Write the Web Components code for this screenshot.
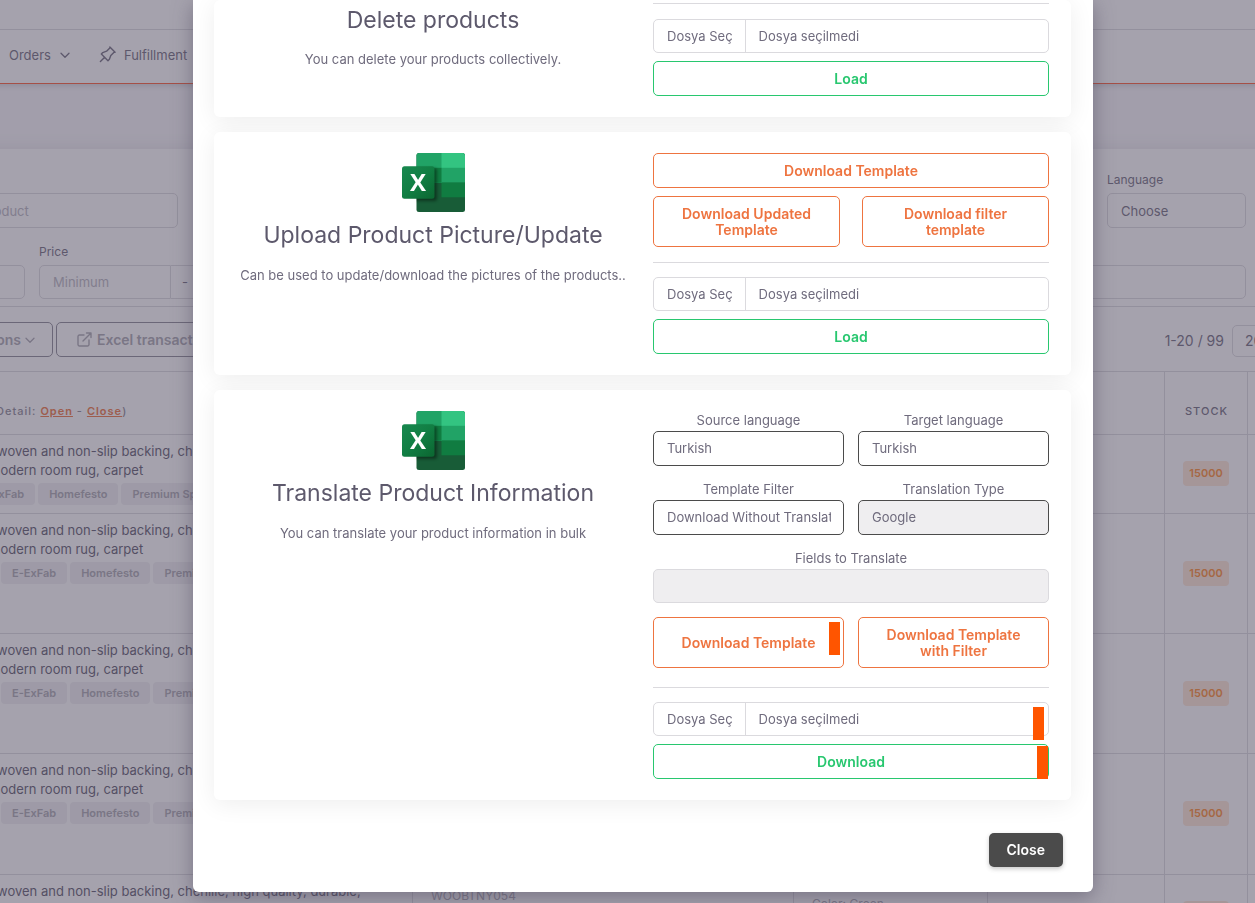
<!DOCTYPE html>
<html lang="en">
<head>
<meta charset="utf-8">
<title>Products</title>
<style>
  html, body { margin: 0; height: 100%; overflow: hidden; }
  body {
    font-family: Inter, "Noto Sans", sans-serif;
    font-size: 13px; line-height: 20px; color: #6f6b7d; background: #f8f7fa;
    --orange: #ee7440; --green: #28c76f; --line: #dbdade; --dark: #4b4b4b;
  }
</style>
</head>
<body>
<products-page></products-page>
<modal-overlay>
  <tool-card>
    <card-intro slot="intro" heading="Delete products" plain>You can delete your products collectively.</card-intro>
    <card-rule class="first"></card-rule>
    <file-picker></file-picker>
    <action-button tone="green">Load</action-button>
  </tool-card>
  <tool-card padded>
    <card-intro slot="intro" heading="Upload Product Picture/Update">Can be used to update/download the pictures of the products..</card-intro>
    <action-button>Download Template</action-button>
    <pair-row wide>
      <action-button tall>Download Updated Template</action-button>
      <action-button tall>Download filter template</action-button>
    </pair-row>
    <card-rule></card-rule>
    <file-picker></file-picker>
    <action-button tone="green">Load</action-button>
  </tool-card>
  <tool-card padded>
    <card-intro slot="intro" heading="Translate Product Information">You can translate your product information in bulk</card-intro>
    <form-grid>
      <select-field label="Source language" value="Turkish"></select-field>
      <select-field label="Target language" value="Turkish"></select-field>
      <select-field label="Template Filter" value="Download Without Translation"></select-field>
      <select-field label="Translation Type" value="Google" disabled></select-field>
      <text-field label="Fields to Translate"></text-field>
    </form-grid>
    <pair-row>
      <action-button tall mark="inset">Download Template</action-button>
      <action-button tall>Download Template with Filter</action-button>
    </pair-row>
    <card-rule roomy></card-rule>
    <file-picker mark></file-picker>
    <action-button tone="green" mark="edge">Download</action-button>
  </tool-card>
  <close-button slot="footer">Close</close-button>
</modal-overlay>

<script>
const define = (name, render) => customElements.define(name, class extends HTMLElement {
  connectedCallback() {
    if (this.shadowRoot) return;
    this.attachShadow({ mode: 'open' }).innerHTML =
      '<style>*,*::before,*::after{box-sizing:border-box}:host{display:block}button,input,select{font:inherit;margin:0}</style>' + render(this);
  }
});
const chevron = '<svg width="12" height="12" viewBox="0 0 12 12" fill="none" stroke="currentColor" stroke-width="1.3" stroke-linecap="round" stroke-linejoin="round"><path d="M2 4.2 6 8.2 10 4.2"/></svg>';

/* ---------- page behind the dialog ---------- */
define('products-page', () => `
  <style>
    :host { margin: 0 -31px 0 -120px; }
    main { margin-top: 65px; background: #fff; box-shadow: 0 0 16px rgba(75,70,92,.12); }
  </style>
  <site-header></site-header>
  <main><product-filters></product-filters><list-toolbar></list-toolbar><product-table></product-table></main>`);

define('site-header', () => `
  <style>
    :host { background: #fff; position: relative; box-shadow: 0 2px 5px rgba(75,70,92,.2); }
    .top { height: 30px; border-bottom: 1px solid var(--line); }
    nav { display: flex; align-items: center; height: 54px; padding: 0 0 4px 129px; border-bottom: 1px solid #ff5a32; font-size: 13px; }
    a { display: flex; align-items: center; color: inherit; text-decoration: none; }
    a + a { margin-left: 28px; }
    a span + svg { margin-left: 8px; }
    svg + span { margin-left: 8px; }
  </style>
  <div class="top"></div>
  <nav>
    <a href="#orders"><span>Orders</span>${chevron}</a>
    <a href="#fulfillment"><svg width="17" height="17" viewBox="3 3 18 18" fill="none" stroke="currentColor" stroke-width="1.5" stroke-linecap="round" stroke-linejoin="round"><path d="M15 4.500l-4 4-4 1.500-1.500 1.500 7 7 1.500-1.500 1.500-4 4-4M9 15l-4.500 4.500M14.500 4l5.500 5.500"/></svg><span>Fulfillment</span></a>
  </nav>`);

define('product-filters', () => `
  <style>
    :host { padding: 23px 40px 7px 0; border-bottom: 1px solid var(--line); font-size: 12px; line-height: 16px; }
    .row { display: flex; align-items: flex-end; }
    .one { gap: 15px; } .two { gap: 14px; margin-top: 16px; }
    .one > :nth-child(1) { flex: 0 0 298px; }
    .one > :nth-child(2), .two > :nth-child(3) { flex: 1; }
    .one > :nth-child(3) { flex: 0 0 139px; }
    .two > :nth-child(1) { flex: 0 0 145px; }
    .two > :nth-child(2) { flex: 0 0 300px; }
    label { display: block; margin-bottom: 5px; }
    input, select { width: 100%; min-width: 0; height: 35px; border: 1px solid var(--line); border-radius: 5px; padding: 0 13px; font-size: 13px; color: inherit; background: #fff; appearance: none; }
    .two input { height: 34px; }
    input::placeholder { color: #b7b5be; opacity: 1; }
    .group { display: flex; }
    .group span { border: solid var(--line); border-width: 1px 0; padding: 8px 11px; font-size: 13px; }
    .group input:first-child { border-radius: 5px 0 0 5px; }
    .group input:last-child { border-radius: 0 5px 5px 0; }
    .group input { flex: 0 0 132px; }
    .end { padding-left: 100px; }
  </style>
  <div class="row one">
    <div><input class="end" aria-label="Product" placeholder="product"></div>
    <div><input aria-label="Category"></div>
    <div><label for="lang">Language</label><select id="lang"><option>Choose</option></select></div>
  </div>
  <div class="row two">
    <div><input aria-label="Code"></div>
    <div><label for="min">Price</label><div class="group"><input id="min" placeholder="Minimum"><span>-</span><input aria-label="Maximum price"></div></div>
    <div><input aria-label="Tags"></div>
  </div>`);

define('list-toolbar', () => `
  <style>
    :host { display: flex; align-items: center; gap: 3px; padding: 15px 0 14px; border-bottom: 1px solid var(--line); font-size: 14px; }
    button, select { flex: none; }
    button { display: flex; align-items: center; height: 35px; border: 1px solid #8b8994; border-radius: 5px; background: none; color: #a8a6af; font-weight: 600; padding: 0 16px 0 20px; white-space: nowrap; }
    .actions { width: 173px; justify-content: flex-end; gap: 3px; }
    .excel { gap: 5px; }
    .count { margin-left: auto; padding-top: 3px; }
    select { width: 54px; height: 32px; margin: 3px 0 0 5px; border: 1px solid var(--line); border-radius: 5px 0 0 5px; padding: 0 12px; background: #fff; color: inherit; appearance: none; }
  </style>
  <button class="actions">Actions${chevron}</button>
  <button class="excel"><svg width="15" height="15" viewBox="0 0 15 15" fill="none" stroke="currentColor" stroke-width="1.4" stroke-linecap="round" stroke-linejoin="round"><path d="M7 3H2.500A1.500 1.500 0 0 0 1 4.500v8A1.500 1.500 0 0 0 2.500 14h8a1.500 1.500 0 0 0 1.500-1.500V8M6 9 14 1M9.500 1H14v4.500"/></svg>Excel transactions</button>
  <span class="count">1-20 / 99</span>
  <select aria-label="Rows per page"><option>20</option></select>`);

define('product-table', () => {
  const row = (h, shift, sku = '', color = '') => `
    <tr style="height:${h}px"><td><product-name shift="${shift}"></product-name></td>
    <td class="sub">${sku}</td><td class="sub low">${color}</td><td></td><td class="stock"><span>15000</span></td><td></td></tr>`;
  return `
  <style>
    table { border-collapse: collapse; table-layout: fixed; width: 100%; }
    tr > * { border-right: 1px solid var(--line); border-bottom: 1px solid var(--line); }
    th { height: 62px; padding: 16px 0 0 20px; text-align: left; font-size: 11px; line-height: 16px; font-weight: 500; letter-spacing: 1px; }
    th:first-child { padding-left: 111px; color: #8b8894; }
    th a { color: var(--orange); font-weight: 600; }
    td { padding: 0; vertical-align: top; }
    .sub { padding: 11px 0 0 18px; color: #a5a3ae; font-size: 12px; }
    .low { padding-top: 19px; }
    .stock { vertical-align: middle; text-align: center; }
    .stock span { display: inline-block; width: 46px; line-height: 25px; border-radius: 4px; background: #ffe6d4; color: #ff8a2c; font-size: 11px; font-weight: 600; }
  </style>
  <table>
    <colgroup><col><col style="width:381px"><col style="width:194px"><col style="width:177px"><col style="width:83px"><col style="width:38px"></colgroup>
    <thead><tr><th>(Detail: <a href="#open">Open</a> - <a href="#close">Close</a>)</th><th></th><th></th><th></th><th>STOCK</th><th></th></tr></thead>
    <tbody>${row(79, 'wide')}${row(120, '')}${row(120, '')}${row(121, '')}${row(79, '', 'WOOBTNY054', 'Color: Green')}</tbody>
  </table>`;
});

define('product-name', () => `
  <style>
    :host { padding: 7px 0 0 109px; color: #5d596c; font-size: 13px; line-height: 19px; white-space: nowrap; overflow: hidden; }
    p { margin: 0; } p:first-of-type { text-indent: 8px; }
    .tags { display: flex; gap: 3px; margin: 3px 0 0 12px; font-size: 11px; line-height: 22px; font-weight: 600; color: #a8a6af; }
    :host([shift="wide"]) .tags { margin-left: -20px; }
    .tags span { padding: 0 11px; background: #f0eff2; border-radius: 4px; }
  </style>
  <p>woven and non-slip backing, chenille, high quality, durable,</p>
  <p>modern room rug, carpet</p>
  <div class="tags"><span>E-ExFab</span><span>Homefesto</span><span>Premium Sports</span></div>`);

/* ---------- dialog ---------- */
define('modal-overlay', () => `
  <style>
    :host { position: fixed; inset: 0; overflow: auto; scrollbar-width: none; background: rgba(75,70,92,.5); padding: 0 0 11px 31px; box-sizing: border-box; }
    section { max-width: 900px; margin: 0 auto; padding: 0 22px 0 21px; background: #fff; border-radius: 0 0 6px 6px; box-shadow: 0 5px 20px rgba(75,70,92,.5); box-sizing: border-box; }
    .cards { display: grid; gap: 15px; }
    footer { display: flex; justify-content: flex-end; padding: 33px 8px 25px 0; }
  </style>
  <section role="dialog" aria-label="Excel transactions">
    <div class="cards"><slot></slot></div>
    <footer><slot name="footer"></slot></footer>
  </section>`);

define('tool-card', () => `
  <style>
    :host { display: grid; grid-template-columns: 1fr 1fr; gap: 22px; padding: 0 22px 21px 21px; background: #fff; border-radius: 6px; box-shadow: 0 4px 24px rgba(0,0,0,.07); }
    :host([padded]) { padding-top: 21px; }
    .controls { display: flex; flex-direction: column; gap: 8px; min-width: 0; }
  </style>
  <slot name="intro"></slot>
  <div class="controls"><slot></slot></div>`);

define('card-intro', el => `
  <style>
    :host { text-align: center; }
    h2 { margin: 0; padding-top: 6px; font-size: 23px; line-height: 34px; font-weight: 400; color: #5d596c; }
    :host([plain]) h2 { padding-top: 3px; }
    p { margin: 13px 0 0; line-height: 20px; }
    :host([plain]) p { margin-top: 12px; }
  </style>
  ${el.hasAttribute('plain') ? '' : '<excel-icon></excel-icon>'}
  <h2>${el.getAttribute('heading')}</h2><p><slot></slot></p>`);

define('excel-icon', () => `
  <style>:host { height: 59px; } svg { display: block; margin: 0 auto; }
  text { font: 700 24px "Open Sans", sans-serif; }</style>
  <svg width="63" height="59" viewBox="0 0 63 59" aria-label="Excel">
    <defs>
      <linearGradient id="plate" x1="0" y1="0" x2="1" y2="1"><stop offset="0" stop-color="#18884f"/><stop offset=".5" stop-color="#117e43"/><stop offset="1" stop-color="#0b6631"/></linearGradient>
      <clipPath id="book"><rect x="14.5" width="48.5" height="59" rx="2.5"/></clipPath>
      <filter id="soft" x="-30%" y="-30%" width="160%" height="160%"><feGaussianBlur stdDeviation="1.5"/></filter>
    </defs>
    <g clip-path="url(#book)">
      <rect x="14" width="49" height="59" fill="#185c37"/>
      <rect x="14" width="26" height="30" fill="#21a366"/><rect x="39.5" width="24" height="15" fill="#33c481"/>
      <rect x="39.5" y="14.8" width="24" height="15" fill="#21a366"/>
      <rect x="14" y="14.8" width="25.5" height="15" fill="#107c41"/>
      <rect x="39.5" y="29.5" width="24" height="14.8" fill="#107c41"/>
      <rect x="2" y="15" width="33" height="33" rx="2.5" fill="#000" opacity=".4" filter="url(#soft)"/>
    </g>
    <rect y="13.2" width="32.5" height="32.5" rx="2.5" fill="url(#plate)"/>
    <text x="16" y="38" text-anchor="middle" fill="#fff">X</text>
  </svg>`);

define('orange-mark', () => `<style>:host { position: absolute; width: 11px; height: 33px; background: #ff5500; pointer-events: none; }</style>`);

define('action-button', el => `
  <style>
    :host { position: relative; min-width: 0; }
    button { display: block; width: 100%; height: 35px; padding: 0 26px; border: 1px solid var(--orange); border-radius: 5px; background: none; color: var(--orange); font-size: 14px; line-height: 16px; font-weight: 600; }
    :host([tall]) button { height: 51px; }
    :host([tone="green"]) button { border-color: var(--green); color: var(--green); }
    :host([mark="inset"]) orange-mark { right: 4px; top: 5px; }
    :host([mark="edge"]) orange-mark { right: 1px; top: 2px; }
  </style>
  <button type="button"><slot></slot></button>${el.hasAttribute('mark') ? '<orange-mark></orange-mark>' : ''}`);

define('pair-row', () => `
  <style>:host { display: grid; grid-template-columns: 1fr 1fr; gap: 14px; } :host([wide]) { gap: 22px; }</style><slot></slot>`);

define('card-rule', () => `
  <style>
    hr { margin: 7px 0 6px; border: 0; border-top: 1px solid var(--line); }
    :host([roomy]) hr { margin-top: 11px; }
    :host(.first) hr { margin-top: 3px; margin-bottom: 7px; }
  </style><hr>`);

define('file-picker', el => `
  <style>
    :host { position: relative; }
    label { display: flex; height: 34px; line-height: 32px; border: 1px solid var(--line); border-radius: 5px; overflow: hidden; font-size: 13px; }
    .pick { padding: 0 12px 0 13px; border-right: 1px solid var(--line); }
    .name { padding: 0 13px; }
    input { position: absolute; inset: 0; width: 100%; opacity: 0; }
    orange-mark { right: 5px; top: 5px; }
  </style>
  <label><span class="pick">Dosya Seç</span><span class="name">Dosya seçilmedi</span><input type="file"></label>${el.hasAttribute('mark') ? '<orange-mark></orange-mark>' : ''}`);

define('form-grid', () => `
  <style>:host { display: grid; grid-template-columns: 1fr 1fr; gap: 14px; margin-bottom: 6px; } ::slotted(text-field) { grid-column: 1 / -1; }</style><slot></slot>`);

define('select-field', el => `
  <style>
    :host { min-width: 0; text-align: center; }
    label { display: block; line-height: 18px; padding-bottom: 2px; }
    select { display: block; width: 100%; height: 35px; padding: 0 12px 1px 13px; border: 1px solid var(--dark); border-radius: 5px; background: #fff; color: #6f6b7d; appearance: none; opacity: 1; }
    select:disabled { background: #efeef0; }
  </style>
  <label for="s">${el.getAttribute('label')}</label>
  <select id="s"${el.hasAttribute('disabled') ? ' disabled' : ''}><option>${el.getAttribute('value')}</option></select>`);

define('text-field', el => `
  <style>
    :host { text-align: center; }
    label { display: block; line-height: 18px; padding-bottom: 2px; }
    input { display: block; width: 100%; height: 34px; border: 1px solid var(--line); border-radius: 5px; background: #efeef0; }
  </style>
  <label for="t">${el.getAttribute('label')}</label><input id="t" disabled>`);

define('close-button', () => `
  <style>button { height: 34px; padding: 0 18px; border: 0; border-radius: 5px; background: var(--dark); color: #fff; font-size: 14px; font-weight: 600; box-shadow: 0 2px 4px rgba(75,75,75,.3); }</style>
  <button type="button"><slot></slot></button>`);
</script>
</body>
</html>
